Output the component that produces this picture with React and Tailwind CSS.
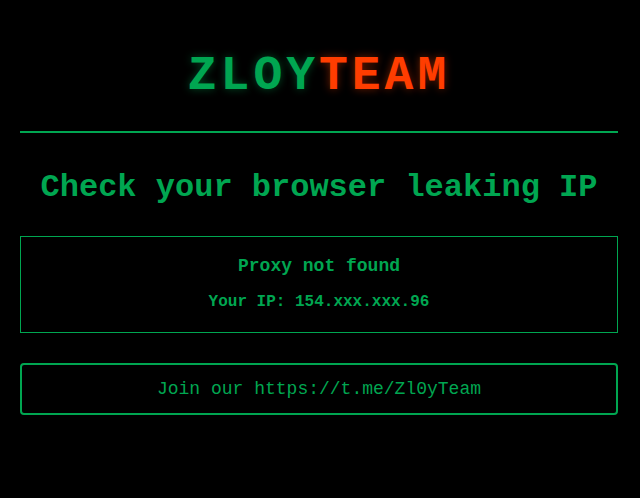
const MONO = "font-['Liberation_Mono','Courier_New',monospace]";

function InfoBox({ status, ip }) {
  return (
    <div className="mt-7 border border-[#00a651] pt-[17px] pb-5 text-center">
      <p className="text-[18px] leading-6 font-bold">{status}</p>
      <p className="mt-[14px] text-[16px] leading-5 font-bold">Your IP: {ip}</p>
    </div>
  );
}

export default function App() {
  return (
    <div className={`min-h-[498px] bg-black pl-5 pr-[22px] text-[#00a651] ${MONO}`}>
      <h1 className="pt-[52px] text-center text-[48px] leading-[48px] font-bold tracking-[4px] [text-shadow:0_0_8px_rgba(0,166,81,0.45)]">
        ZLOY
        <span className="text-[#ff3d00] [text-shadow:0_0_8px_rgba(255,61,0,0.45)]">TEAM</span>
      </h1>
      <hr className="mt-[31px] h-[2px] border-0 bg-[#00a651]" />
      <h2 className="mt-[35px] text-center text-[32px] leading-10 font-bold">
        Check your browser leaking IP
      </h2>
      <InfoBox status="Proxy not found" ip="154.xxx.xxx.96" />
      <div className="mt-[30px] rounded border-2 border-[#00a651] py-3 text-center text-[18px] leading-6">
        Join our https://t.me/Zl0yTeam
      </div>
    </div>
  );
}
